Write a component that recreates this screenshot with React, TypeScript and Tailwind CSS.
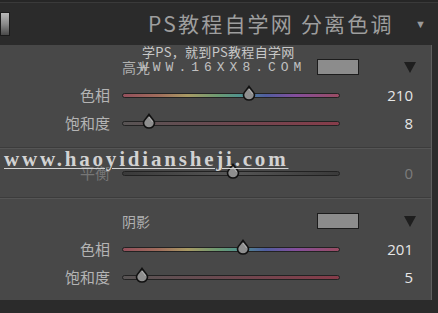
import React from 'react'

const cjk = { fontFamily: '"Noto Sans CJK SC", "Noto Sans", sans-serif' }
const num = { fontFamily: '"Open Sans", "Liberation Sans", sans-serif' }

const HUE = 'linear-gradient(to right, #94505c 0%, #a06c5c 16%, #a89a64 30%, #6c9a72 44%, #50928e 54%, #505ea0 66%, #844e9c 80%, #9a4c62 100%)'
const SAT = 'linear-gradient(to right, #585454 0%, #684a50 40%, #863c4a 100%)'
const BAL = 'linear-gradient(to right, #3a3a3a 0%, #555 50%, #3a3a3a 100%)'

function Thumb({ x }: { x: number }) {
  return (
    <svg className="absolute -top-[9px]" style={{ left: x - 8 }} width="16" height="16" viewBox="0 0 16 16">
      <path d="M8 1.5 C9.5 4 13.5 7 13.5 10 A5.5 5 0 0 1 2.5 10 C2.5 7 6.5 4 8 1.5 Z" fill="#8e8e8e" stroke="#111" strokeWidth="1.6" />
      <path d="M8 4 C9 6 11 7.5 11.5 9" fill="none" stroke="#b5b5b5" strokeWidth="1" />
    </svg>
  )
}

function SliderRow({ label, value, pos, track, dim }: { label: string; value: string; pos: number; track: string; dim?: boolean }) {
  return (
    <div className="flex items-center h-[28px]">
      <div className={`w-[110px] text-right text-[15px] ${dim ? 'text-[#767676]' : 'text-[#b4b4b4]'}`} style={cjk}>{label}</div>
      <div className="relative ml-[12px] w-[218px] h-[5px] rounded-full border border-[#222]" style={{ background: track }}>
        <Thumb x={pos} />
      </div>
      <div className={`w-[73px] text-right text-[15px] ${dim ? 'text-[#7c7c7c]' : 'text-[#e6e6e6]'}`} style={num}>{value}</div>
    </div>
  )
}

function SectionHead({ label }: { label: string }) {
  return (
    <div className="flex items-center h-[28px]">
      <div className="w-[122px]" />
      <div className="w-[195px] text-[14px] text-[#b0b0b0]" style={cjk}>{label}</div>
      <div className="w-[42px] h-[16px] bg-[#8c8c8c] border border-[#1c1c1c]" />
      <div className="ml-[45px] w-0 h-0 border-l-[6px] border-r-[6px] border-t-[11px] border-l-transparent border-r-transparent border-t-[#1e1e1e]" />
    </div>
  )
}

export default function App() {
  return (
    <div className="relative w-[438px] h-[313px] bg-[#2b2b2b] overflow-hidden flex flex-col">
      <div className="h-[3px] bg-[#262626] border-b border-[#3a3a3a]" />
      <div className="h-[42px] flex items-center relative">
        <div className="absolute left-0 top-[9px] w-[10px] h-[24px] border border-[#1a1a1a] bg-gradient-to-b from-[#b8b8b8] via-[#8a8a8a] to-[#4a4a4a]" />
        <div className="ml-[148px] text-[21px] text-[#9e9e9e] tracking-[2.2px]" style={cjk}>PS教程自学网 分离色调</div>
        <div className="ml-auto mr-[12px] text-[11px] text-[#9a9a9a]">▼</div>
      </div>
      <div className="flex-1 flex">
        <div className="w-[432px] h-[255px] bg-[#484848] border-r border-[#5e5e5e] flex flex-col">
          <div className="h-[103px] pt-[8px] border-b border-[#3c3c3c]">
            <SectionHead label="高光" />
            <SliderRow label="色相" value="210" pos={126} track={HUE} />
            <SliderRow label="饱和度" value="8" pos={26} track={SAT} />
          </div>
          <div className="h-[50px] pt-[10px] border-b border-[#3c3c3c] border-t border-t-[#555]">
            <SliderRow label="平衡" value="0" pos={110} track={BAL} dim />
          </div>
          <div className="flex-1 pt-[8px] border-t border-[#555]">
            <SectionHead label="阴影" />
            <SliderRow label="色相" value="201" pos={120} track={HUE} />
            <SliderRow label="饱和度" value="5" pos={19} track={SAT} />
          </div>
        </div>
      </div>
      <div className="absolute left-[142px] top-[42px] text-[13px] text-[#c8c8c8] tracking-[0.3px]" style={{ fontFamily: '"Noto Sans CJK SC", serif' }}>学PS，就到PS教程自学网</div>
      <div className="absolute left-[140px] top-[58px] text-[13px] text-[#c0c0c0] tracking-[5px]" style={{ fontFamily: '"Liberation Mono", monospace' }}>WWW.16XX8.COM</div>
      <div className="absolute left-[4px] top-[144px] text-[21px] font-bold text-[#d2d2d2] underline decoration-1 underline-offset-2 tracking-[2.8px]" style={{ fontFamily: '"Liberation Serif", serif' }}>www.haoyidiansheji.com</div>
    </div>
  )
}
